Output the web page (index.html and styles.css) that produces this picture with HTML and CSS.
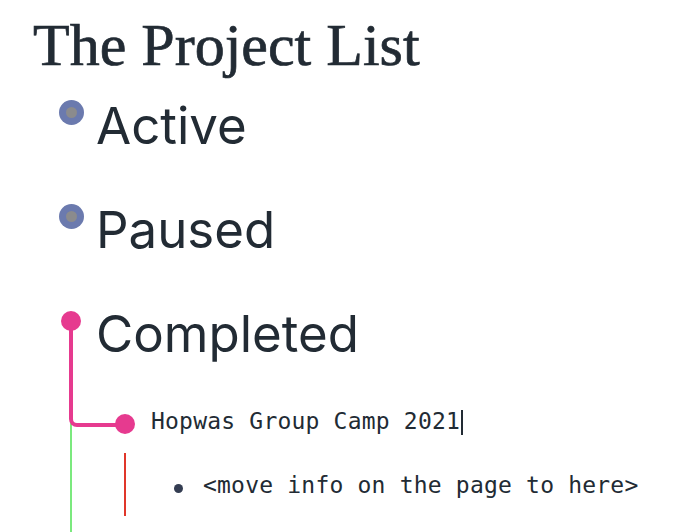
FILE: index.html
```html
<!DOCTYPE html>
<html>
<head>
    <title>The Project List</title>
    <meta charset="utf-8" />
    <link rel="stylesheet" href="styles.css">
</head>
<body>
    <div class="page">
        <h1 class="title">The Project List</h1>
        <ul class="outline">
            <li class="node">
                <div class="row">
                    <span class="bullet-col"><span class="bullet folded"></span></span>
                    <span class="heading">Active</span>
                </div>
            </li>
            <li class="node">
                <div class="row">
                    <span class="bullet-col"><span class="bullet folded"></span></span>
                    <span class="heading">Paused</span>
                </div>
            </li>
            <li class="node">
                <div class="row">
                    <span class="bullet-col"><span class="bullet open"></span></span>
                    <span class="heading">Completed</span>
                </div>
                <ul class="children">
                    <li class="child">
                        <div class="sub-row">
                            <span class="sub-col"><span class="bullet open"></span></span>
                            <span class="mono">Hopwas Group Camp 2021<span class="caret"></span></span>
                        </div>
                        <ul class="grandchildren">
                            <li class="leaf">
                                <span class="dot"></span>
                                <span class="mono">&lt;move info on the page to here&gt;</span>
                            </li>
                        </ul>
                    </li>
                </ul>
            </li>
        </ul>
    </div>
</body>
</html>
```

FILE: styles.css
```css
body {
    margin: 0;
    padding: 0;
    background-color: #fff;
    color: #222b34;
    overflow: hidden;
}
.page {
    padding: 9px 0 0 33px;
}
.title {
    font-family: "Liberation Serif", serif;
    font-weight: 400;
    font-size: 60px;
    line-height: 72px;
    margin: 0;
    -webkit-text-stroke: 0.7px #222b34;
}
ul {
    list-style: none;
    margin: 0;
    padding: 0;
}
.outline {
    margin: 14px 0 0 25px;
}
.row {
    display: flex;
    align-items: flex-start;
    margin-bottom: 42px;
}
.bullet-col {
    width: 26px;
    height: 35px;
    display: flex;
    align-items: center;
    justify-content: center;
    margin-right: 12px;
}
.bullet {
    display: block;
    border-radius: 50%;
    position: relative;
    z-index: 2;
}
.bullet.folded {
    width: 25px;
    height: 25px;
    background-color: #6b7aae;
}
.bullet.folded::after {
    content: "";
    position: absolute;
    left: 7px;
    top: 7px;
    width: 11px;
    height: 11px;
    border-radius: 50%;
    background-color: #8b8b8d;
}
.bullet.open {
    width: 20px;
    height: 20px;
    background-color: #e63a8f;
}
.heading {
    font-family: "Inter", sans-serif;
    font-size: 51px;
    line-height: 62px;
}
.children {
    margin: -3px 0 0 12px;
    border-left: 2px solid #7be97e;
    padding: 0 0 30px 43px;
}
.child {
    position: relative;
}
.child::before {
    content: "";
    position: absolute;
    left: -46px;
    top: -83px;
    width: 58px;
    height: 106px;
    box-sizing: border-box;
    border-left: 4px solid #e63a8f;
    border-bottom: 4px solid #e63a8f;
    border-bottom-left-radius: 8px;
    z-index: 1;
}
.sub-row {
    display: flex;
    align-items: flex-start;
}
.sub-col {
    width: 20px;
    padding-top: 10px;
    margin-right: 16px;
}
.mono {
    font-family: "DejaVu Sans Mono", monospace;
    font-size: 23px;
    line-height: 34px;
    letter-spacing: 0.2px;
    white-space: nowrap;
}
.caret {
    display: inline-block;
    width: 2px;
    height: 25px;
    background-color: #222b34;
    vertical-align: -6px;
    margin-left: 1px;
}
.grandchildren {
    margin: 15px 0 0 9px;
    border-left: 2px solid #e0362a;
    padding: 15px 0 14px 48px;
}
.leaf {
    display: flex;
    align-items: flex-start;
}
.dot {
    width: 9px;
    height: 9px;
    border-radius: 50%;
    background-color: #343d52;
    margin: 16px 20px 0 0;
}
```
